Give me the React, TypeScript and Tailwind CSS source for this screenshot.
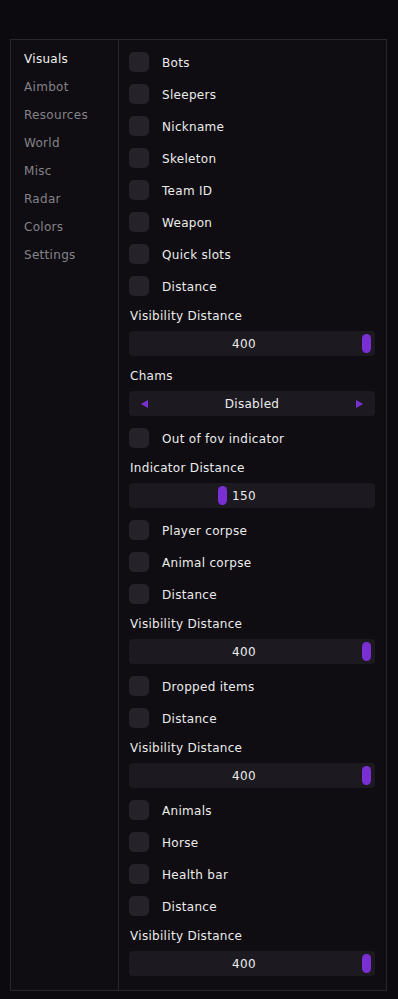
const tabs = ['Visuals', 'Aimbot', 'Resources', 'World', 'Misc', 'Radar', 'Colors', 'Settings'];

type Item =
  | { kind: 'check'; label: string }
  | { kind: 'slider'; label: string; value: number; max: number }
  | { kind: 'combo'; label: string; value: string };

const items: Item[] = [
  { kind: 'check', label: 'Bots' },
  { kind: 'check', label: 'Sleepers' },
  { kind: 'check', label: 'Nickname' },
  { kind: 'check', label: 'Skeleton' },
  { kind: 'check', label: 'Team ID' },
  { kind: 'check', label: 'Weapon' },
  { kind: 'check', label: 'Quick slots' },
  { kind: 'check', label: 'Distance' },
  { kind: 'slider', label: 'Visibility Distance', value: 400, max: 400 },
  { kind: 'combo', label: 'Chams', value: 'Disabled' },
  { kind: 'check', label: 'Out of fov indicator' },
  { kind: 'slider', label: 'Indicator Distance', value: 150, max: 400 },
  { kind: 'check', label: 'Player corpse' },
  { kind: 'check', label: 'Animal corpse' },
  { kind: 'check', label: 'Distance' },
  { kind: 'slider', label: 'Visibility Distance', value: 400, max: 400 },
  { kind: 'check', label: 'Dropped items' },
  { kind: 'check', label: 'Distance' },
  { kind: 'slider', label: 'Visibility Distance', value: 400, max: 400 },
  { kind: 'check', label: 'Animals' },
  { kind: 'check', label: 'Horse' },
  { kind: 'check', label: 'Health bar' },
  { kind: 'check', label: 'Distance' },
  { kind: 'slider', label: 'Visibility Distance', value: 400, max: 400 },
];

const Checkbox = ({ label }: { label: string }) => (
  <div className="flex items-center h-[20px]">
    <div className="w-[20px] h-[20px] rounded-[5px] bg-[#252329]" />
    <span className="ml-[13px] pt-px text-[#ececec]">{label}</span>
  </div>
);

const Slider = ({ label, value, max }: { label: string; value: number; max: number }) => {
  const left = 3 + (value / max) * 230;
  return (
    <div className="flex flex-col gap-[7px]">
      <span className="h-[16px] leading-[16px] pl-px text-[#ececec]">{label}</span>
      <div className="relative h-[25px] rounded-[4px] bg-[#1c1a20] flex items-center justify-center pr-[16px]">
        <span className="text-[#ececec]">{value}</span>
        <div
          className="absolute top-[3px] w-[9px] h-[19px] rounded-full bg-[#7a2fd3]"
          style={{ left }}
        />
      </div>
    </div>
  );
};

const Combo = ({ label, value }: { label: string; value: string }) => (
  <div className="flex flex-col gap-[7px]">
    <span className="h-[16px] leading-[16px] pl-px text-[#ececec]">{label}</span>
    <div className="h-[25px] rounded-[4px] bg-[#1c1a20] flex items-center justify-between px-[11px]">
      <svg width="9" height="10" viewBox="0 0 9 10">
        <path d="M8 1 L1 5 L8 9 Z" fill="#7a2fd3" />
      </svg>
      <span className="text-[#ececec]">{value}</span>
      <svg width="9" height="10" viewBox="0 0 9 10">
        <path d="M1 1 L8 5 L1 9 Z" fill="#7a2fd3" />
      </svg>
    </div>
  </div>
);

export default function App() {
  return (
    <div
      className="w-[398px] h-[999px] bg-[#0c0a0e] pt-[39px] pl-[10px] text-[12px] leading-[16px] tracking-[0.3px]"
      style={{ fontFamily: '"DejaVu Sans", sans-serif' }}
    >
      <div className="w-[377px] h-[952px] border border-[#29272d] bg-[#0f0d11] flex">
        {/* Sidebar */}
        <div className="w-[108px] border-r border-[#29272d] flex flex-col pt-[11px] pl-[13px] gap-[12px]">
          {tabs.map((t, i) => (
            <span key={t} className={i === 0 ? 'text-[#f0f0f0]' : 'text-[#85838a]'}>
              {t}
            </span>
          ))}
        </div>

        {/* Content */}
        <div className="flex-1 flex flex-col gap-[12px] pt-[12px] pl-[10px] pr-[11px]">
          {items.map((it, i) =>
            it.kind === 'check' ? (
              <Checkbox key={i} label={it.label} />
            ) : it.kind === 'slider' ? (
              <Slider key={i} label={it.label} value={it.value} max={it.max} />
            ) : (
              <Combo key={i} label={it.label} value={it.value} />
            )
          )}
        </div>
      </div>
    </div>
  );
}
